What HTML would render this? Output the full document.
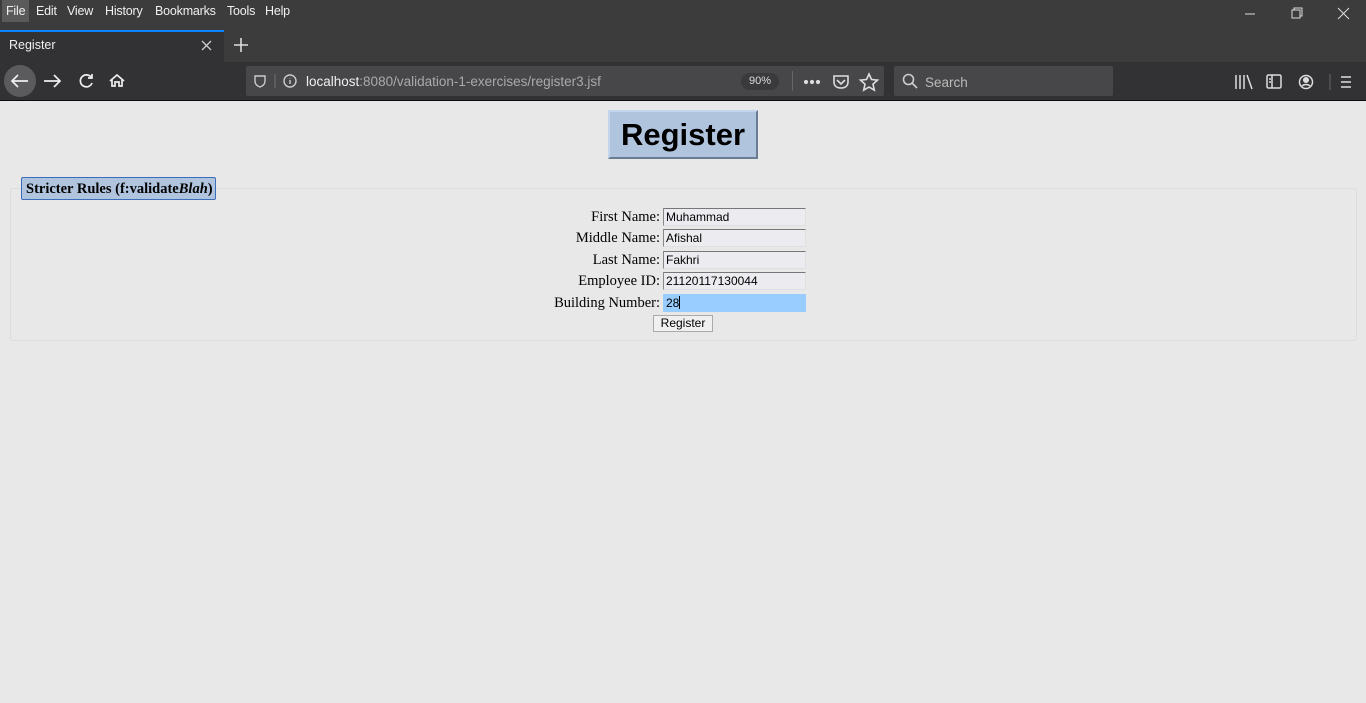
<!DOCTYPE html>
<html><head><meta charset="utf-8"><style>
*{margin:0;padding:0;box-sizing:border-box}
body{width:1366px;height:703px;overflow:hidden;background:#e8e8e8;font-family:"Liberation Sans",sans-serif;position:relative}
.a{position:absolute}
#top{left:0;top:0;width:1366px;height:62px;background:#3c3c3c}
.menu{top:1px;height:22px;font-size:12.5px;color:#f0f0f0;line-height:20px;letter-spacing:-0.2px}
#tab{left:0;top:30px;width:224px;height:32px;background:#323234;border-top:2px solid #0a84ff}
#tb{left:0;top:62px;width:1366px;height:39px;background:#323234;border-bottom:1px solid #0c0c0d}
#url{left:246px;top:66px;width:638px;height:30px;background:#474749;border-radius:2px}
#srch{left:894px;top:66px;width:219px;height:30px;background:#474749;border-radius:2px}
.lbl{font-family:"Liberation Serif",serif;font-size:14.5px;color:#000;text-align:right;width:300px;left:360px}
.in{left:663px;width:143px;height:18px;background:#ececf0;border:1px solid #e0e0e0;border-top:1px solid #777;border-left:1px solid #888;font-size:12px;line-height:16px;padding-left:2px;color:#000}
</style></head><body>
<div id="top" class="a"></div>
<div class="a" style="left:2px;top:0;width:27px;height:22px;background:#5a5a5a"></div>
<div class="a menu" style="left:6px">File</div>
<div class="a menu" style="left:36px">Edit</div>
<div class="a menu" style="left:67px">View</div>
<div class="a menu" style="left:105px">History</div>
<div class="a menu" style="left:155px">Bookmarks</div>
<div class="a menu" style="left:227px">Tools</div>
<div class="a menu" style="left:265px">Help</div>
<svg class="a" style="left:1240px;top:6px" width="120" height="16" stroke="#ddd" fill="none" stroke-width="1"><path d="M5 8h10"/><path d="M52 4h8v8h-8zM54 4V2h8v8h-2"/><path d="M98 2l11 11M109 2L98 13"/></svg>
<div id="tab" class="a"></div>
<div class="a" style="left:9px;top:38px;font-size:12.5px;color:#f0f0f0">Register</div>
<svg class="a" style="left:200px;top:39px" width="13" height="13" stroke="#ccc" stroke-width="1.3"><path d="M2 2l9 9M11 2l-9 9"/></svg>
<svg class="a" style="left:232px;top:36px" width="18" height="18" stroke="#ddd" stroke-width="1.6"><path d="M9 2v14M2 9h14"/></svg>
<div id="tb" class="a"></div>
<div class="a" style="left:4px;top:65px;width:32px;height:32px;border-radius:50%;background:#5b5b5d"></div>
<svg class="a" style="left:0;top:66px" width="140" height="30" stroke="#eee" stroke-width="1.7" fill="none"><path d="M28 15H12M18 9l-6 6 6 6"/><path d="M44 15h16M54 9l6 6-6 6"/><path d="M91 11a6 6 0 1 0 1 6M92 8v4h-4"/><path d="M110 15l7-6 7 6M112 13v7h3v-4h4v4h3v-7"/></svg>
<div id="url" class="a"></div>
<svg class="a" style="left:252px;top:73px" width="50" height="16" stroke="#ccc" fill="none" stroke-width="1.4"><path d="M3 3h10v5c0 3-2 5-5 6-3-1-5-3-5-6z"/><line x1="23" y1="1" x2="23" y2="15" stroke="#666"/><circle cx="38" cy="8" r="6"/><path d="M38 7v4M38 5v.5"/></svg>
<div class="a" style="left:306px;top:74px;font-size:13.5px;color:#f0f0f0">localhost<span style="color:#aaa">:8080/validation-1-exercises/register3.jsf</span></div>
<div class="a" style="left:741px;top:73px;width:38px;height:17px;border-radius:9px;background:#3a3a3c;font-size:11px;color:#ddd;text-align:center;line-height:17px">90%</div>
<div class="a" style="left:792px;top:71px;width:1px;height:20px;background:#666"></div>
<svg class="a" style="left:802px;top:72px" width="80" height="20" fill="none" stroke="#ddd" stroke-width="1.6"><circle cx="4" cy="10" r="1.3" fill="#ddd"/><circle cx="10" cy="10" r="1.3" fill="#ddd"/><circle cx="16" cy="10" r="1.3" fill="#ddd"/><path d="M32 4h14v6c0 4-3 6-7 6s-7-2-7-6z"/><path d="M35 8l4 4 4-4"/><path d="M67 2l2.5 5.5 6 .6-4.5 4 1.3 6-5.3-3.1-5.3 3.1 1.3-6-4.5-4 6-.6z"/></svg>
<div id="srch" class="a"></div>
<svg class="a" style="left:902px;top:73px" width="16" height="16" fill="none" stroke="#ccc" stroke-width="1.6"><circle cx="6.5" cy="6.5" r="5"/><path d="M10 10l5 5"/></svg>
<div class="a" style="left:925px;top:75px;font-size:13.5px;color:#bbb">Search</div>
<svg class="a" style="left:1232px;top:72px" width="130" height="20" fill="none" stroke="#ddd" stroke-width="1.5"><path d="M4 3v14M8 3v14M12 3v14M15 3l5 14"/><rect x="35" y="3" width="14" height="13" rx="1.5"/><path d="M40 3v13M37 7h2M37 10h2"/><circle cx="74" cy="10" r="6.5"/><circle cx="74" cy="8" r="2.3" fill="#ddd"/><path d="M70 14c2-2 6-2 8 0" /><line x1="98" y1="2" x2="98" y2="18" stroke="#555"/><path d="M109 5h10M109 10h10M109 15h10"/></svg>

<div class="a" style="left:608px;top:110px;width:150px;height:49px;background:#b0c4de;border:2px solid;border-color:#c4d4ea #6a7c94 #6a7c94 #c4d4ea;font-weight:bold;font-size:31px;text-align:center;line-height:45px;color:#000">Register</div>
<div class="a" style="left:10px;top:188px;width:1347px;height:153px;border:1px solid #dcdcdc;border-radius:3px"></div>
<div class="a" style="left:21px;top:177px;width:195px;height:23px;background:#b0c4de;border:1px solid #3b6dbd;border-radius:2px;font-family:'Liberation Serif',serif;font-weight:bold;font-size:14.5px;line-height:22px;padding-left:4px;color:#000">Stricter Rules (f:validate<i>Blah</i>)</div>

<div class="a lbl" style="top:209px">First Name:</div>
<div class="a in" style="top:208px">Muhammad</div>
<div class="a lbl" style="top:230px">Middle Name:</div>
<div class="a in" style="top:229px">Afishal</div>
<div class="a lbl" style="top:252px">Last Name:</div>
<div class="a in" style="top:251px">Fakhri</div>
<div class="a lbl" style="top:273px">Employee ID:</div>
<div class="a in" style="top:272px">21120117130044</div>
<div class="a lbl" style="top:295px">Building Number:</div>
<div class="a in" style="top:294px;background:#99ccff;border-color:#99ccff">28<span style="display:inline-block;width:1px;height:13px;background:#000;vertical-align:-2px"></span></div>
<div class="a" style="left:653px;top:315px;width:60px;height:17px;background:#f0f0f0;border:1px solid #aaa;font-size:12px;text-align:center;line-height:15px;color:#000">Register</div>
</body></html>
